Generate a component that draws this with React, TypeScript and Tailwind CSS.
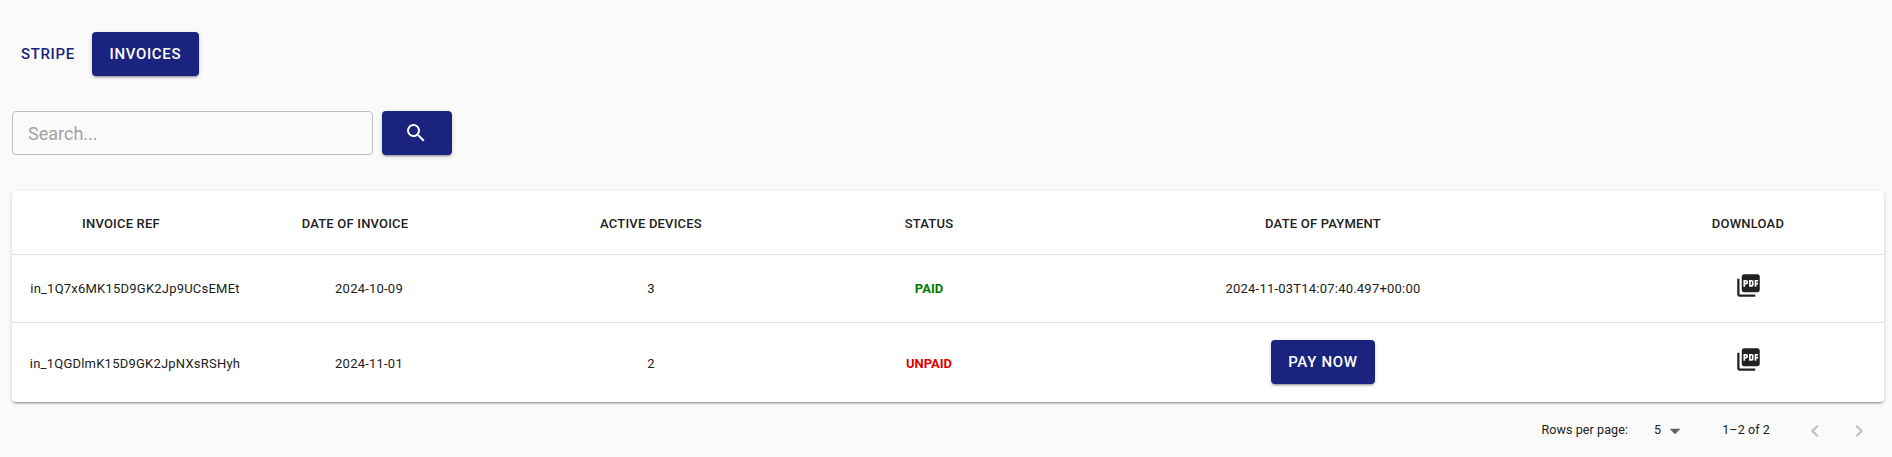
import { MdSearch, MdPictureAsPdf, MdArrowDropDown, MdChevronLeft, MdChevronRight } from 'react-icons/md';

const invoices = [
  { ref: 'in_1Q7x6MK15D9GK2Jp9UCsEMEt', date: '2024-10-09', devices: 3, paid: true, paidAt: '2024-11-03T14:07:40.497+00:00' },
  { ref: 'in_1QGDlmK15D9GK2JpNXsRSHyh', date: '2024-11-01', devices: 2, paid: false, paidAt: '' },
];

const raised = 'shadow-[0_3px_1px_-2px_rgba(0,0,0,0.2),0_2px_2px_0_rgba(0,0,0,0.14),0_1px_5px_0_rgba(0,0,0,0.12)]';

function HeaderCell({ children, className = '' }: { children: string; className?: string }) {
  return (
    <th className={`h-[63px] border-b border-[#e0e0e0] pt-0.5 text-center text-[13px] font-medium uppercase tracking-[0.2px] text-[#212121] ${className}`}>
      {children}
    </th>
  );
}

export default function App() {
  return (
    <div className="min-h-[457px] bg-[#fafafa] pl-3 pr-2 pt-8 font-['Roboto',sans-serif]">
      {/* Tabs */}
      <div className="flex items-center gap-2">
        <button className="h-11 rounded px-[9px] text-[15px] font-medium uppercase tracking-[0.65px] text-[#1a237e]">Stripe</button>
        <button className={`h-11 w-[107px] rounded bg-[#1a237e] text-[15px] font-medium uppercase tracking-[0.65px] text-white ${raised}`}>
          Invoices
        </button>
      </div>

      {/* Search */}
      <div className="mt-[35px] flex items-center gap-[9px]">
        <input
          placeholder="Search..."
          className="h-11 w-[361px] rounded border border-[#bdbdbd] bg-transparent px-[15px] text-lg text-[#212121] placeholder:text-[#a3a3a3] outline-none"
        />
        <button className={`flex h-11 w-[70px] items-center justify-center rounded bg-[#1a237e] pr-0.5 text-white ${raised}`}>
          <MdSearch size={24} />
        </button>
      </div>

      {/* Invoice table */}
      <div className={`mt-9 overflow-hidden rounded bg-white ${raised}`}>
        <table className="w-full table-fixed border-collapse">
          <colgroup>
            <col className="w-[246px]" />
            <col className="w-[222px]" />
            <col className="w-[342px]" />
            <col className="w-[214px]" />
            <col className="w-[574px]" />
            <col className="w-[274px]" />
          </colgroup>
          <thead>
            <tr>
              <HeaderCell className="pr-7">Invoice ref</HeaderCell>
              <HeaderCell className="pr-7">Date of invoice</HeaderCell>
              <HeaderCell>Active devices</HeaderCell>
              <HeaderCell>Status</HeaderCell>
              <HeaderCell>Date of payment</HeaderCell>
              <HeaderCell className="pl-0.5">Download</HeaderCell>
            </tr>
          </thead>
          <tbody className="text-center text-[13px] tracking-[0.22px] text-[#212121]">
            {invoices.map((invoice, i) => (
              <tr key={invoice.ref} className={i === 0 ? 'h-[68px] border-b border-[#e0e0e0]' : 'h-[80px]'}>
                <td className="pt-0.5">{invoice.ref}</td>
                <td className="pt-0.5">{invoice.date}</td>
                <td className="pt-0.5">{invoice.devices}</td>
                <td className={invoice.paid ? 'pt-0.5 text-[13px] font-bold uppercase tracking-normal text-[#007a00]' : 'pt-0.5 text-[13px] font-bold uppercase tracking-normal text-[#e00000]'}>
                  {invoice.paid ? 'Paid' : 'Unpaid'}
                </td>
                <td className={invoice.paid ? 'pt-0.5' : ''}>
                  {invoice.paid ? (
                    invoice.paidAt
                  ) : (
                    <button className={`h-11 w-[104px] rounded bg-[#1a237e] text-[15px] font-medium uppercase tracking-[0.7px] text-white ${raised}`}>
                      Pay now
                    </button>
                  )}
                </td>
                <td className="pl-0.5">
                  <MdPictureAsPdf size={27} className="mx-auto -mt-[6px] text-[#212121]" />
                </td>
              </tr>
            ))}
          </tbody>
        </table>
      </div>

      {/* Pagination */}
      <div className="flex h-[57px] items-center justify-end text-[12.5px] tracking-[0.1px] text-[#212121]">
        <span>Rows per page:</span>
        <span className="ml-[26px]">5</span>
        <MdArrowDropDown size={26} className="ml-px text-[#616161]" />
        <span className="ml-[34px]">1–2 of 2</span>
        <MdChevronLeft size={24} className="ml-[33px] text-[#bdbdbd]" />
        <MdChevronRight size={24} className="ml-5 mr-[13px] text-[#bdbdbd]" />
      </div>
    </div>
  );
}
